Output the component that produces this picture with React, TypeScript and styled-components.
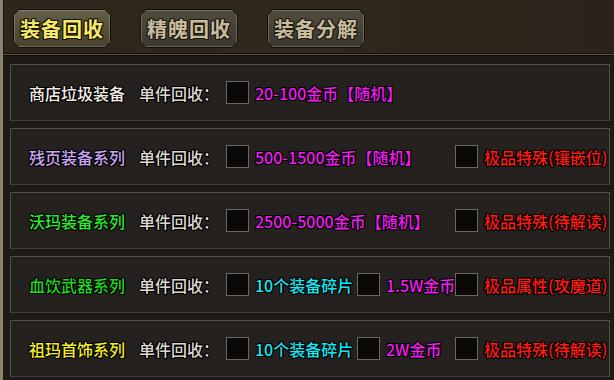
import React from 'react';
import styled, { createGlobalStyle } from 'styled-components';

const Global = createGlobalStyle`
  html, body {
    margin: 0;
    padding: 0;
    background: #1c1916;
  }
  body {
    font-family: "Noto Sans CJK SC", "Noto Sans", sans-serif;
  }
`;

const outline = (c: string) =>
  `-1px -1px 0 ${c}, 1px -1px 0 ${c}, -1px 1px 0 ${c}, 1px 1px 0 ${c}, 0 1px 0 ${c}, 0 -1px 0 ${c}, 1px 0 0 ${c}, -1px 0 0 ${c}`;

const Page = styled.div`
  width: 614px;
  height: 380px;
  box-sizing: border-box;
  border-left: 3px solid #8b8269;
  background: #1d1a17;
  display: flex;
  flex-direction: column;
  overflow: hidden;
`;

const Header = styled.div`
  height: 53px;
  box-sizing: border-box;
  padding: 9px 0 0 9px;
  display: flex;
  gap: 29px;
  align-items: flex-start;
  background: linear-gradient(90deg, #2e261a 0%, #30281c 50%, #2b2319 100%);
  border-left: 1px solid #15110c;
`;

const TabOuter = styled.div`
  width: 98px;
  height: 39px;
  padding: 1px;
  box-sizing: border-box;
  background: #110f0a;
  clip-path: polygon(6px 0, calc(100% - 6px) 0, 100% 6px, 100% calc(100% - 6px), calc(100% - 6px) 100%, 6px 100%, 0 calc(100% - 6px), 0 6px);
`;

const TabFace = styled.div<{ $active?: boolean }>`
  height: 100%;
  display: flex;
  align-items: center;
  justify-content: center;
  clip-path: polygon(5px 0, calc(100% - 5px) 0, 100% 5px, 100% calc(100% - 5px), calc(100% - 5px) 100%, 5px 100%, 0 calc(100% - 5px), 0 5px);
  background: ${(p) =>
    p.$active
      ? 'linear-gradient(180deg, #65604b 0%, #524e39 55%, #46422f 100%)'
      : 'linear-gradient(180deg, #514d3d 0%, #444136 55%, #3a382e 100%)'};
  box-shadow: inset 0 0 0 1px rgba(190, 180, 150, 0.35);
  font-size: 20px;
  font-weight: bold;
  letter-spacing: 1px;
  color: ${(p) => (p.$active ? '#f6ea6c' : '#c7bd9e')};
  text-shadow: ${(p) => outline(p.$active ? '#1a1200' : '#1e1a12')};
`;

const Divider = styled.div`
  height: 3px;
  border-top: 1px solid #14110d;
  border-bottom: 1px solid #100e0b;
  background: #5a5245;
  box-sizing: border-box;
`;

const List = styled.div`
  flex: 1;
  padding: 8px 0 0 7px;
  display: flex;
  flex-direction: column;
  gap: 7px;
`;

const Row = styled.div`
  width: 600px;
  height: 57px;
  box-sizing: border-box;
  border: 1px solid #534e48;
  border-bottom-color: #3f3b36;
  background: #25211e;
  padding-left: 18px;
  display: grid;
  grid-template-columns: 110px 87px 131px 98px 1fr;
  align-items: center;
  font-size: 16px;
  font-weight: 500;
  white-space: nowrap;
`;

const Text = styled.span<{ $color: string }>`
  color: ${(p) => p.$color};
  text-shadow: ${outline('#000')};
  line-height: 1;
`;

const Group = styled.div<{ $span?: number }>`
  display: flex;
  align-items: center;
  gap: 6px;
  grid-column: span ${(p) => p.$span ?? 1};
`;

const Check = styled.div`
  width: 23px;
  height: 23px;
  box-sizing: border-box;
  border: 1px solid #6a655f;
  background: #0b0908;
  flex: none;
`;

const MAGENTA = '#f01cf0';
const RED = '#ff1a14';
const CYAN = '#14e6f2';

type Cell = { text: string; color: string; span?: number };

const rows: { name: string; color: string; cells: Cell[] }[] = [
  { name: '商店垃圾装备', color: '#f3efe6', cells: [{ text: '20-100金币【随机】', color: MAGENTA, span: 2 }] },
  {
    name: '残页装备系列',
    color: '#c8a6f4',
    cells: [
      { text: '500-1500金币【随机】', color: MAGENTA, span: 2 },
      { text: '极品特殊(镶嵌位)', color: RED },
    ],
  },
  {
    name: '沃玛装备系列',
    color: '#2cea2c',
    cells: [
      { text: '2500-5000金币【随机】', color: MAGENTA, span: 2 },
      { text: '极品特殊(待解读)', color: RED },
    ],
  },
  {
    name: '血饮武器系列',
    color: '#1fd81f',
    cells: [
      { text: '10个装备碎片', color: CYAN },
      { text: '1.5W金币', color: MAGENTA },
      { text: '极品属性(攻魔道)', color: RED },
    ],
  },
  {
    name: '祖玛首饰系列',
    color: '#f2ee22',
    cells: [
      { text: '10个装备碎片', color: CYAN },
      { text: '2W金币', color: MAGENTA },
      { text: '极品特殊(待解读)', color: RED },
    ],
  },
];

const App = () => {
  return (
    <>
      <Global />
      <Page>
        <Header>
          <TabOuter>
            <TabFace $active>装备回收</TabFace>
          </TabOuter>
          <TabOuter>
            <TabFace>精魄回收</TabFace>
          </TabOuter>
          <TabOuter>
            <TabFace>装备分解</TabFace>
          </TabOuter>
        </Header>
        <Divider />
        <List>
          {rows.map((r) => (
            <Row key={r.name}>
              <Text $color={r.color}>{r.name}</Text>
              <Text $color="#dcd8d0">单件回收：</Text>
              {r.cells.map((c) => (
                <Group key={c.text + c.color} $span={c.span}>
                  <Check />
                  <Text $color={c.color}>{c.text}</Text>
                </Group>
              ))}
            </Row>
          ))}
        </List>
      </Page>
    </>
  );
};

export default App;
